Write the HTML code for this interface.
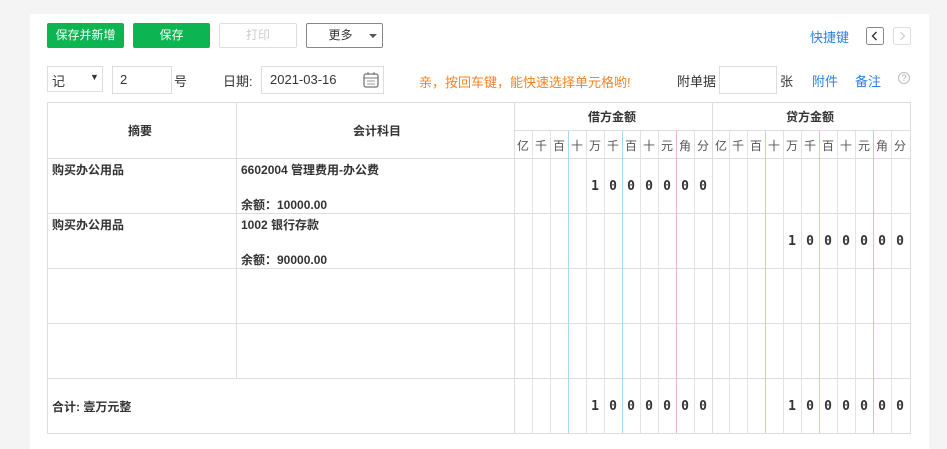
<!DOCTYPE html>
<html><head><meta charset="utf-8"><style>
*{margin:0;padding:0;box-sizing:border-box}
body{width:947px;height:449px;background:#f4f4f4;font-family:"Liberation Sans","Noto Sans CJK SC",sans-serif;font-size:12px;color:#333;position:relative;overflow:hidden}
.a{position:absolute}
.panel{left:30px;top:14px;width:899px;height:435px;background:#fff}
.btn{height:25px;line-height:23px;text-align:center;font-size:12px;border-radius:2px}
.g{background:#0cb552;color:#fff;border:1px solid #0cb552}
.v{width:1px}
.lb{background:#a6daf3}
.lr{background:#f2b8b8}
.lg{background:#e3e3e3}
.d{font-family:"DejaVu Sans Mono","Liberation Mono",monospace;font-weight:bold;font-size:13px;width:18px;text-align:center;color:#333}
.u{width:18px;text-align:center;font-size:12px;color:#555;top:137px}
.t{font-size:12px;font-weight:bold;color:#333}
</style></head><body>
<div class="a panel"></div>
<div class="a btn g" style="left:47px;top:23px;width:77px">保存并新增</div>
<div class="a btn g" style="left:133px;top:23px;width:77px">保存</div>
<div class="a btn" style="left:219px;top:23px;width:78px;border:1px solid #ddd;color:#ccc">打印</div>
<div class="a btn" style="left:306px;top:23px;width:77px;border:1px solid #888;color:#333"><span style="margin-left:-8px">更多</span></div>
<div class="a" style="left:369px;top:34px;border-left:4px solid transparent;border-right:4px solid transparent;border-top:4px solid #555"></div>
<div class="a" style="left:810px;top:27px;color:#2a82e4;font-size:13px">快捷键</div>
<svg class="a" style="left:866px;top:27px" width="18" height="18"><rect x="0.5" y="0.5" width="17" height="17" rx="2" fill="#fff" stroke="#888"/><path d="M10.5 5 L6.5 9 L10.5 13" fill="none" stroke="#333" stroke-width="1.4"/></svg>
<svg class="a" style="left:893px;top:27px" width="18" height="18"><rect x="0.5" y="0.5" width="17" height="17" rx="2" fill="#fff" stroke="#ddd"/><path d="M7.5 5 L11.5 9 L7.5 13" fill="none" stroke="#ccc" stroke-width="1.2"/></svg>

<div class="a" style="left:47px;top:66px;width:56px;height:26px;border:1px solid #ddd;padding:4px 4px;font-size:13px">记<span style="position:absolute;left:42px;top:5px;font-size:9px">▼</span></div>
<div class="a" style="left:112px;top:66px;width:60px;height:28px;border:1px solid #ddd;padding:5px 7px;font-size:13px">2</div>
<div class="a" style="left:174px;top:71px;font-size:13px">号</div>
<div class="a" style="left:223px;top:71px;font-size:13px">日期:</div>
<div class="a" style="left:261px;top:66px;width:123px;height:28px;border:1px solid #ddd;padding:5px 8px;font-size:13px">2021-03-16</div>
<svg class="a" style="left:363px;top:72px" width="16" height="16"><rect x="1" y="2" width="14" height="13" rx="2" fill="none" stroke="#777" stroke-width="1.3"/><line x1="1" y1="6" x2="15" y2="6" stroke="#777"/><line x1="4" y1="9" x2="12" y2="9" stroke="#999"/><line x1="4" y1="12" x2="12" y2="12" stroke="#999"/><line x1="5" y1="0" x2="5" y2="3" stroke="#777"/><line x1="11" y1="0" x2="11" y2="3" stroke="#777"/></svg>
<div class="a" style="left:419px;top:72px;color:#f7831e;font-size:13px">亲，按回车键，能快速选择单元格哟!</div>
<div class="a" style="left:677px;top:71px;font-size:13px">附单据</div>
<div class="a" style="left:719px;top:66px;width:58px;height:28px;border:1px solid #ddd"></div>
<div class="a" style="left:780px;top:71px;font-size:13px">张</div>
<div class="a" style="left:812px;top:71px;font-size:13px;color:#2a82e4">附件</div>
<div class="a" style="left:855px;top:71px;font-size:13px;color:#2a82e4">备注</div>
<div class="a" style="left:898px;top:72px;width:12px;height:12px;border:1px solid #bbb;border-radius:50%;font-size:9px;line-height:10px;text-align:center;color:#aaa">?</div>

<div class="a" style="left:47px;top:102px;width:864px;height:332px;border:1px solid #ddd"></div>
<div class="a v" style="left:236px;top:102px;height:277px;background:#ddd"></div>
<div class="a v" style="left:514px;top:102px;height:331px;background:#ddd"></div>
<div class="a v" style="left:712px;top:102px;height:331px;background:#ddd"></div>
<div class="a" style="left:514px;top:130px;width:397px;height:1px;background:#ddd"></div>
<div class="a" style="left:47px;top:158px;width:864px;height:1px;background:#ddd"></div>
<div class="a" style="left:47px;top:213px;width:864px;height:1px;background:#ddd"></div>
<div class="a" style="left:47px;top:268px;width:864px;height:1px;background:#ddd"></div>
<div class="a" style="left:47px;top:323px;width:864px;height:1px;background:#ddd"></div>
<div class="a" style="left:47px;top:378px;width:864px;height:1px;background:#ddd"></div>

<div class="a t" style="left:128px;top:122px">摘要</div>
<div class="a t" style="left:353px;top:122px">会计科目</div>
<div class="a t" style="left:588px;top:108px">借方金额</div>
<div class="a t" style="left:786px;top:108px">贷方金额</div>

<div class="a v lg" style="left:532px;top:131px;height:302px"></div>
<div class="a v lg" style="left:550px;top:131px;height:302px"></div>
<div class="a v lb" style="left:568px;top:131px;height:302px"></div>
<div class="a v lg" style="left:586px;top:131px;height:302px"></div>
<div class="a v lg" style="left:604px;top:131px;height:302px"></div>
<div class="a v lb" style="left:622px;top:131px;height:302px"></div>
<div class="a v lg" style="left:640px;top:131px;height:302px"></div>
<div class="a v lg" style="left:658px;top:131px;height:302px"></div>
<div class="a v lr" style="left:676px;top:131px;height:302px"></div>
<div class="a v lg" style="left:694px;top:131px;height:302px"></div>
<div class="a v lg" style="left:729px;top:131px;height:302px"></div>
<div class="a v lg" style="left:747px;top:131px;height:302px"></div>
<div class="a v lb" style="left:765px;top:131px;height:302px"></div>
<div class="a v lg" style="left:783px;top:131px;height:302px"></div>
<div class="a v lg" style="left:801px;top:131px;height:302px"></div>
<div class="a v lb" style="left:819px;top:131px;height:302px"></div>
<div class="a v lg" style="left:837px;top:131px;height:302px"></div>
<div class="a v lg" style="left:855px;top:131px;height:302px"></div>
<div class="a v lr" style="left:873px;top:131px;height:302px"></div>
<div class="a v lg" style="left:891px;top:131px;height:302px"></div>

<div class="a u" style="left:514px">亿</div><div class="a u" style="left:532px">千</div><div class="a u" style="left:550px">百</div><div class="a u" style="left:568px">十</div><div class="a u" style="left:586px">万</div><div class="a u" style="left:604px">千</div><div class="a u" style="left:622px">百</div><div class="a u" style="left:640px">十</div><div class="a u" style="left:658px">元</div><div class="a u" style="left:676px">角</div><div class="a u" style="left:694px">分</div>
<div class="a u" style="left:712px">亿</div><div class="a u" style="left:729px">千</div><div class="a u" style="left:747px">百</div><div class="a u" style="left:765px">十</div><div class="a u" style="left:783px">万</div><div class="a u" style="left:801px">千</div><div class="a u" style="left:819px">百</div><div class="a u" style="left:837px">十</div><div class="a u" style="left:855px">元</div><div class="a u" style="left:873px">角</div><div class="a u" style="left:891px">分</div>

<div class="a t" style="left:52px;top:161px">购买办公用品</div>
<div class="a t" style="left:241px;top:161px">6602004 管理费用-办公费</div>
<div class="a t" style="left:241px;top:196px">余额：10000.00</div>
<div class="a t" style="left:52px;top:216px">购买办公用品</div>
<div class="a t" style="left:241px;top:216px">1002 银行存款</div>
<div class="a t" style="left:241px;top:251px">余额：90000.00</div>
<div class="a t" style="left:52px;top:398px">合计: 壹万元整</div>

<div class="a d" style="left:586px;top:179px">1</div><div class="a d" style="left:604px;top:179px">0</div><div class="a d" style="left:622px;top:179px">0</div><div class="a d" style="left:640px;top:179px">0</div><div class="a d" style="left:658px;top:179px">0</div><div class="a d" style="left:676px;top:179px">0</div><div class="a d" style="left:694px;top:179px">0</div>
<div class="a d" style="left:783px;top:234px">1</div><div class="a d" style="left:801px;top:234px">0</div><div class="a d" style="left:819px;top:234px">0</div><div class="a d" style="left:837px;top:234px">0</div><div class="a d" style="left:855px;top:234px">0</div><div class="a d" style="left:873px;top:234px">0</div><div class="a d" style="left:891px;top:234px">0</div>
<div class="a d" style="left:586px;top:399px">1</div><div class="a d" style="left:604px;top:399px">0</div><div class="a d" style="left:622px;top:399px">0</div><div class="a d" style="left:640px;top:399px">0</div><div class="a d" style="left:658px;top:399px">0</div><div class="a d" style="left:676px;top:399px">0</div><div class="a d" style="left:694px;top:399px">0</div>
<div class="a d" style="left:783px;top:399px">1</div><div class="a d" style="left:801px;top:399px">0</div><div class="a d" style="left:819px;top:399px">0</div><div class="a d" style="left:837px;top:399px">0</div><div class="a d" style="left:855px;top:399px">0</div><div class="a d" style="left:873px;top:399px">0</div><div class="a d" style="left:891px;top:399px">0</div>
</body></html>
